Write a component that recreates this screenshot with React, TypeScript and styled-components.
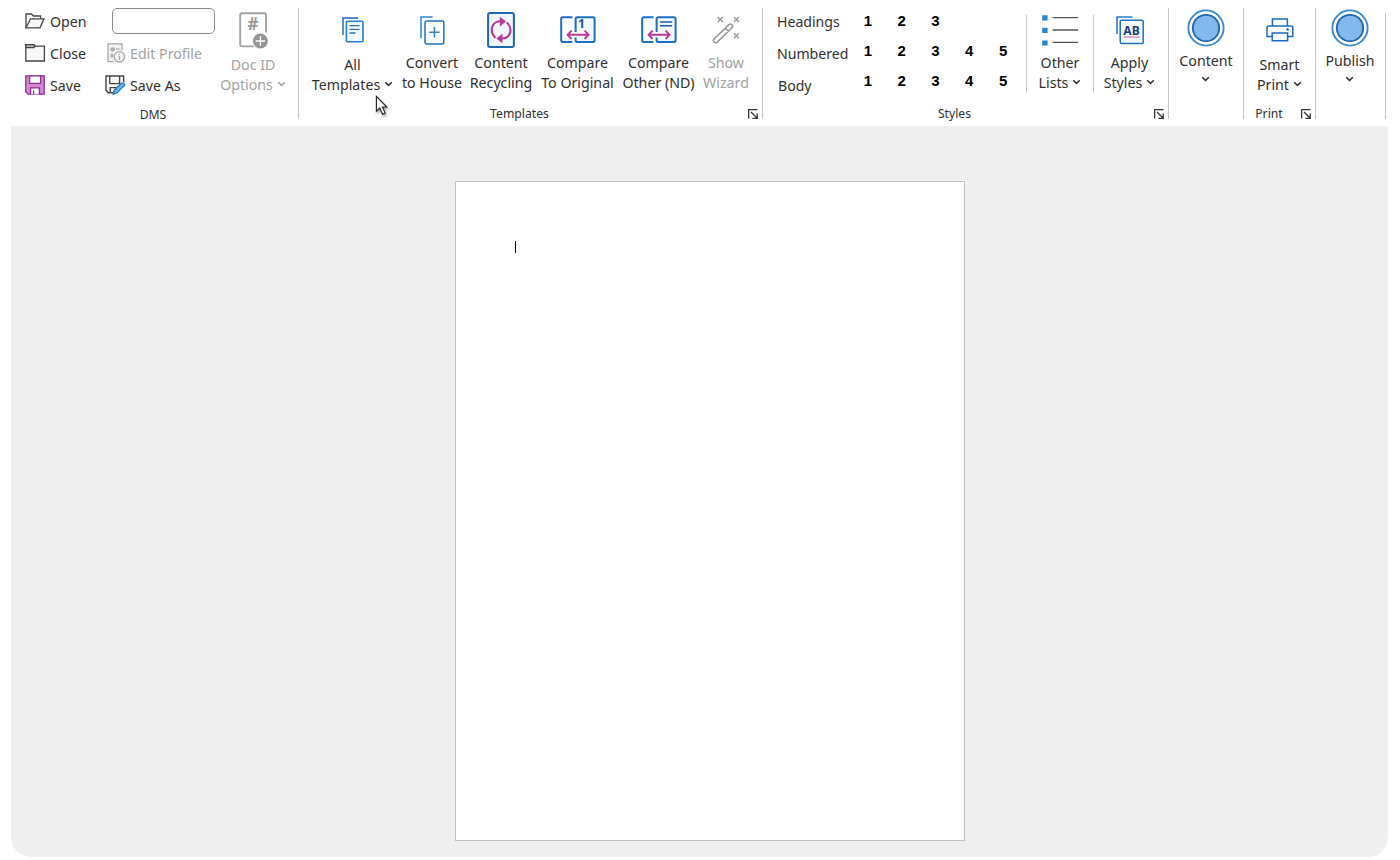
import React from "react";
import styled, { createGlobalStyle } from "styled-components";

const GlobalStyle = createGlobalStyle`
  body {
    margin: 0;
    background: #fff;
    font-family: "Noto Sans", "Open Sans", sans-serif;
    color: #303030;
    overflow: hidden;
  }
`;

const Shell = styled.div`
  width: 1400px;
  height: 860px;
  box-sizing: border-box;
  padding: 0 12px 3px 11px;
  display: flex;
  flex-direction: column;
  background: #fff;
`;

const Ribbon = styled.div`
  height: 126px;
  display: flex;
  flex: none;
`;

const Group = styled.section<{ $width: number; $top?: number }>`
  width: ${(p) => p.$width}px;
  height: 126px;
  box-sizing: border-box;
  display: flex;
  flex-direction: column;
  flex: none;
  background: linear-gradient(#c6c6c6, #c6c6c6) no-repeat right 0 top ${(p) => p.$top ?? 8}px / 1px
    ${(p) => 119 - (p.$top ?? 8)}px;
`;

const GroupBody = styled.div<{ $left?: number }>`
  height: 104px;
  padding-left: ${(p) => p.$left ?? 0}px;
  display: flex;
  align-items: flex-start;
`;

const GroupFooter = styled.div<{ $left?: number; $right?: number; $top?: number }>`
  display: flex;
  align-items: center;
  height: 19px;
  padding: ${(p) => p.$top ?? 0}px ${(p) => p.$right ?? 0}px 0 ${(p) => p.$left ?? 0}px;
`;

const GroupName = styled.div`
  flex: 1;
  text-align: center;
  font-size: 12.2px;
  line-height: 19px;
`;

const LauncherSlot = styled.div`
  width: 23px;
  height: 12px;
  display: flex;
  justify-content: flex-end;
  box-sizing: border-box;
  padding: 1px 5px 0 0;
`;

const BigButton = styled.div<{ $width: number; $muted?: boolean }>`
  width: ${(p) => p.$width}px;
  flex: none;
  display: flex;
  flex-direction: column;
  align-items: center;
  color: ${(p) => (p.$muted ? "#a3a3a3" : "#303030")};
`;

const IconSlot = styled.div<{ $height?: number; $nudge?: number }>`
  height: ${(p) => p.$height ?? 44}px;
  padding-top: 8px;
  padding-left: ${(p) => p.$nudge ?? 0}px;
  display: flex;
  align-items: center;
  justify-content: center;
`;

const Line = styled.div`
  height: 20px;
  line-height: 20px;
  font-size: 14.2px;
  white-space: nowrap;
  display: flex;
  align-items: center;
  gap: 4px;
`;

const ChevronLine = styled.div`
  height: 18px;
  padding-right: 1px;
  display: flex;
  align-items: center;
`;

const Lines = styled.div<{ $top?: number }>`
  padding-top: ${(p) => p.$top ?? 1}px;
  display: flex;
  flex-direction: column;
  align-items: center;
`;

const Divider = styled.div`
  width: 1px;
  height: 78px;
  margin-top: 15px;
  background: #cacaca;
`;

const DmsColumn = styled.div<{ $width: number }>`
  width: ${(p) => p.$width}px;
  padding-top: 5px;
`;

const Command = styled.div<{ $muted?: boolean; $indent?: number }>`
  height: 32px;
  padding-left: ${(p) => p.$indent ?? 0}px;
  display: flex;
  align-items: center;
  gap: 4px;
  font-size: 14.2px;
  white-space: nowrap;
  color: ${(p) => (p.$muted ? "#a3a3a3" : "#303030")};
  svg {
    flex: none;
  }
`;

const DocNumber = styled.input`
  display: block;
  width: 103px;
  height: 26px;
  box-sizing: border-box;
  margin: 3px 0 3px 7px;
  border: 1px solid #8a8a8a;
  border-radius: 5px;
  background: #fff;
  padding: 0 6px;
`;

const StyleNames = styled.div`
  width: 74px;
  padding-top: 6px;
`;

const StyleName = styled.div<{ $indent?: number }>`
  height: 32px;
  padding-left: ${(p) => p.$indent ?? 0}px;
  line-height: 32px;
  font-size: 14.1px;
  white-space: nowrap;
`;

const LevelGrid = styled.div`
  display: grid;
  grid-template-columns: repeat(5, 33.8px);
  grid-auto-rows: 30px;
  padding-top: 6px;
  width: 175px;
  box-sizing: border-box;
`;

const Level = styled.div<{ $col: number; $row: number }>`
  grid-column: ${(p) => p.$col};
  grid-row: ${(p) => p.$row};
  font: bold 15px/30px "Liberation Sans", Arial, sans-serif;
  text-align: center;
  color: #000;
`;

const Workspace = styled.main`
  flex: 1;
  background: #efefef;
  border-radius: 0 0 20px 20px;
  padding: 55px 0 0 444px;
`;

const Page = styled.div`
  width: 510px;
  height: 660px;
  box-sizing: border-box;
  border: 1px solid #c2c2c2;
  background: #fff;
  padding: 59px;
`;

const Caret = styled.div`
  width: 1px;
  height: 12px;
  background: #000;
`;

const Pointer = styled.svg`
  position: absolute;
  left: 374px;
  top: 94px;
  filter: drop-shadow(1px 2px 1px rgba(0, 0, 0, 0.35));
`;

const Chevron = ({ muted }: { muted?: boolean }) => (
  <svg width="9" height="8" viewBox="0 0 9 8" fill="none" stroke={muted ? "#a3a3a3" : "#333"} strokeWidth="1.5">
    <path d="M1.2 1.2L4.5 4.4L7.8 1.2" />
  </svg>
);

const Launcher = () => (
  <LauncherSlot>
    <svg width="10" height="10" viewBox="0 0 10 10" fill="none" stroke="#333" strokeWidth="1.3">
      <path d="M0.6 9.5V0.6H9.5M3 3L9 9M9.2 4.4V9.3H4.4" />
    </svg>
  </LauncherSlot>
);

const OpenIcon = () => (
  <svg width="21" height="20" viewBox="0 0 21 20" fill="none" stroke="#444" strokeWidth="1.3">
    <path d="M1 16.8V3H6.5L8.5 5H15.6V7.8" />
    <path d="M1 16.8L5.5 7.8H19L15 16.8Z" fill="#f6f6f6" />
  </svg>
);

const CloseIcon = () => (
  <svg width="21" height="20" viewBox="0 0 21 20" fill="none" stroke="#444" strokeWidth="1.3">
    <path d="M0.8 18V1.6H8.8L10 3.2H19.4V18Z" fill="#f8f8f8" />
    <path d="M0.8 1.6H8.8L10 3.2L8.8 4.6H0.8Z" fill="#b5b5b5" />
  </svg>
);

const SaveIcon = () => (
  <svg width="21" height="20" viewBox="0 0 21 20" stroke="#8f2f91" strokeWidth="1.3">
    <path d="M0.8 0.8H19.2V19.2H3.2L0.8 17Z" fill="#d587d3" />
    <path d="M4.6 0.8H15.6V8.4H4.6Z" fill="#fff" />
    <path d="M5.6 19.2V12.8H14.4V19.2" fill="#fff" />
    <path d="M8.6 15.4V19.2" fill="none" />
  </svg>
);

const EditProfileIcon = () => (
  <svg width="19" height="20" viewBox="0 0 19 20" fill="none" stroke="#a9a9a9" strokeWidth="1.3">
    <path d="M6.5 18.6H1V0.8H15V7.5" fill="#f3f3f3" />
    <path d="M4 5H7.2V8H4ZM4 11.2H5.8V14H4Z" fill="#b5b5b5" strokeWidth="1" />
    <path d="M9 6H12.6" />
    <circle cx="12.4" cy="13.8" r="5.2" fill="#f6f6f6" />
    <path d="M12.4 12.8V17M12.4 10.4V11.7" strokeWidth="1.5" />
  </svg>
);

const SaveAsIcon = () => (
  <svg width="21" height="21" viewBox="0 0 21 21" fill="none" stroke="#444" strokeWidth="1.4">
    <path d="M8 17.8H3.4L1 15.4V1H18.6V7" />
    <path d="M4.8 1V8.6H14.6V1" />
    <path d="M5.2 17.8V12.6H11" />
    <path d="M9 15.2L16.6 8Q18.8 7.4 19.8 9.8L12.4 17.6L8.2 19.4Z" fill="#67b1e6" stroke="#1c78bf" strokeWidth="1.2" />
  </svg>
);

const HashText = styled.text`
  font: 700 17px "Noto Sans", sans-serif;
  fill: #999;
  stroke: none;
`;

const DocIdIcon = () => (
  <svg width="30" height="37" viewBox="0 0 30 37" fill="none" stroke="#a3a3a3">
    <path d="M14.6 34.4H3Q1.2 34.4 1.2 32.6V3Q1.2 1.2 3 1.2H25.2Q27 1.2 27 3V20.6" strokeWidth="1.9" />
    <HashText x="8.6" y="18">#</HashText>
    <circle cx="21.4" cy="29" r="7.5" fill="#969696" stroke="none" />
    <path d="M21.4 24.2V33.8M16.6 29H26.2" stroke="#fff" strokeWidth="1.4" />
  </svg>
);

const AllTemplatesIcon = () => (
  <svg width="22" height="26" viewBox="0 0 22 26" fill="none">
    <path d="M1 18V1H16" stroke="#1765b8" strokeWidth="1.4" />
    <rect x="4.4" y="4.2" width="16.6" height="20.6" rx="1" fill="#f5fafe" stroke="#2280d4" strokeWidth="1.6" />
    <path d="M7.5 8.6H17.5M7.5 12.3H17.5M7.5 16H13.6" stroke="#2a6fb8" strokeWidth="1.3" />
  </svg>
);

const ConvertIcon = () => (
  <svg width="25" height="29" viewBox="0 0 25 29" fill="none">
    <path d="M1 22.5V1H12.6" stroke="#2a86d6" strokeWidth="1.5" />
    <rect x="5" y="5" width="18.8" height="23" rx="1.5" fill="#f7fbfe" stroke="#2273c0" strokeWidth="1.5" />
    <path d="M14.4 11V21.4M9.2 16.2H19.6" stroke="#3f80b8" strokeWidth="1.5" />
  </svg>
);

const RecyclingIcon = () => (
  <svg width="28" height="36" viewBox="0 0 28 36" fill="none">
    <rect x="1.1" y="1.1" width="25.8" height="33.8" rx="2" fill="#f2f7fc" stroke="#1c68b4" strokeWidth="2" />
    <path d="M8.4 26Q2.4 19.4 6 13Q8.6 9 14.5 9.2" stroke="#b93a9c" strokeWidth="2.1" />
    <path d="M12.8 4.8L19 9.6L12.8 14.4Z" fill="#b93a9c" />
    <path d="M20 10.4Q25.8 17 22 23.2Q19.4 26.8 13.8 26.6" stroke="#b93a9c" strokeWidth="2.1" />
    <path d="M15.4 21.6L9.4 26.4L15.4 31.2Z" fill="#b93a9c" />
  </svg>
);

const OneText = styled.text`
  font: 700 11.5px "Noto Sans", sans-serif;
  fill: #174f94;
`;

const CompareIcon = ({ variant }: { variant: "number" | "lines" }) => (
  <svg width="36" height="28" viewBox="0 0 36 28" fill="none">
    <path d="M12.4 1.2H3Q1.2 1.2 1.2 3V24.2Q1.2 26 3 26H12.4" stroke="#1c6fc2" strokeWidth="2" />
    <path d="M15.6 16V3Q15.6 1.2 17.4 1.2H32.8Q34.6 1.2 34.6 3V24.2Q34.6 26 32.8 26H17.4Q15.6 26 15.6 24.2V21.4" fill="#f3f8fd" stroke="#1c6fc2" strokeWidth="2" />
    {variant === "number" ? (
      <OneText x="18.2" y="12.4">1</OneText>
    ) : (
      <path d="M19 6H31.2M19 9.8H31.2" stroke="#1c5ea6" strokeWidth="1.6" />
    )}
    <path d="M8 18.8H28M11.6 14.8L7.8 18.8L11.6 22.8M24.6 14.8L28.4 18.8L24.6 22.8" stroke="#fff" strokeWidth="3.6" />
    <path d="M8 18.8H28M11.6 14.6L7.6 18.8L11.6 23M24.6 14.6L28.6 18.8L24.6 23" stroke="#b93a9c" strokeWidth="1.9" />
  </svg>
);

const WizardIcon = () => (
  <svg width="29" height="28" viewBox="0 0 29 28" fill="none" stroke="#979797" strokeWidth="1.5">
    <path d="M1.6 23.4L17.2 8.4Q18.6 7.4 20 8.8Q21.2 10.2 20.2 11.6L5 26.4Q3.4 27.4 2 26Q0.8 24.6 1.6 23.4ZM13.2 12.2L16.6 15.4" />
    <path d="M5.8 1L10.8 6M10.8 1L5.8 6M22 1L27 6M27 1L22 6M22 17.2L27 22.2M27 17.2L22 22.2" strokeWidth="1.3" />
  </svg>
);

const OtherListsIcon = () => (
  <svg width="36" height="31" viewBox="0 0 36 31">
    <path d="M0.2 0.2H5.6V5.4H0.2ZM0.2 12.8H5.6V18H0.2ZM0.2 25.4H5.6V30.6H0.2Z" fill="#2b86cd" />
    <path d="M10.6 2.6H36M10.6 15H36M10.6 27.4H36" stroke="#555" strokeWidth="1.4" />
  </svg>
);

const AbText = styled.text`
  font: 700 12px "Noto Sans", sans-serif;
  letter-spacing: 0.3px;
  fill: #193d80;
`;

const ApplyStylesIcon = () => (
  <svg width="28" height="29" viewBox="0 0 28 29" fill="none">
    <path d="M1 18V1H16.5" stroke="#2a7dcc" strokeWidth="1.6" />
    <rect x="4.2" y="4.2" width="23" height="23.4" rx="1.5" fill="#f7fbff" stroke="#2273c0" strokeWidth="1.5" />
    <AbText x="7.2" y="19.4">AB</AbText>
    <path d="M7.2 21H24" stroke="#d65cae" strokeWidth="1" />
  </svg>
);

const CircleIcon = () => (
  <svg width="38" height="38" viewBox="0 0 38 38">
    <circle cx="19" cy="19" r="17.6" fill="#fff" stroke="#3a8aca" strokeWidth="1.9" />
    <circle cx="19" cy="19" r="13.2" fill="#82b9ee" stroke="#1d66b0" strokeWidth="1.8" />
  </svg>
);

const PrinterIcon = () => (
  <svg width="28" height="24" viewBox="0 0 28 24" fill="none" stroke="#1c6cc0" strokeWidth="1.5">
    <path d="M6.4 8V1H21.4V8" fill="#f7fbff" />
    <path d="M6.2 18.6H1V10Q1 8 3 8H24.8Q26.8 8 26.8 10V18.6H21.6" />
    <path d="M6.2 15H21.6V22.8H6.2Z" fill="#f7fbff" />
    <circle cx="21.6" cy="11.4" r="1.2" fill="#174f94" stroke="none" />
  </svg>
);

const levels = [3, 5, 5];

export default function App() {
  return (
    <Shell>
      <GlobalStyle />
      <Ribbon>
        <Group $width={288}>
          <GroupBody $left={14}>
            <DmsColumn $width={80}>
              <Command><OpenIcon />Open</Command>
              <Command><CloseIcon />Close</Command>
              <Command><SaveIcon />Save</Command>
            </DmsColumn>
            <DmsColumn $width={110}>
              <DocNumber />
              <Command $muted $indent={2}><EditProfileIcon />Edit Profile</Command>
              <Command><SaveAsIcon />Save As</Command>
            </DmsColumn>
            <BigButton $width={76} $muted>
              <IconSlot $nudge={1}><DocIdIcon /></IconSlot>
              <Lines $top={3}>
                <Line>Doc ID</Line>
                <Line>Options <Chevron muted /></Line>
              </Lines>
            </BigButton>
          </GroupBody>
          <GroupFooter $right={4} $top={1}><GroupName>DMS</GroupName></GroupFooter>
        </Group>

        <Group $width={464}>
          <GroupBody $left={7}>
            <BigButton $width={93}>
              <IconSlot $nudge={1}><AllTemplatesIcon /></IconSlot>
              <Lines $top={3}>
                <Line>All</Line>
                <Line>Templates <Chevron /></Line>
              </Lines>
            </BigButton>
            <BigButton $width={66}>
              <IconSlot><ConvertIcon /></IconSlot>
              <Lines><Line>Convert</Line><Line>to House</Line></Lines>
            </BigButton>
            <BigButton $width={72}>
              <IconSlot><RecyclingIcon /></IconSlot>
              <Lines><Line>Content</Line><Line>Recycling</Line></Lines>
            </BigButton>
            <BigButton $width={81}>
              <IconSlot><CompareIcon variant="number" /></IconSlot>
              <Lines><Line>Compare</Line><Line>To Original</Line></Lines>
            </BigButton>
            <BigButton $width={81}>
              <IconSlot><CompareIcon variant="lines" /></IconSlot>
              <Lines><Line>Compare</Line><Line>Other (ND)</Line></Lines>
            </BigButton>
            <BigButton $width={54} $muted>
              <IconSlot><WizardIcon /></IconSlot>
              <Lines><Line>Show</Line><Line>Wizard</Line></Lines>
            </BigButton>
          </GroupBody>
          <GroupFooter><GroupName>Templates</GroupName><Launcher /></GroupFooter>
        </Group>

        <Group $width={406}>
          <GroupBody $left={14}>
            <StyleNames>
              <StyleName>Headings</StyleName>
              <StyleName>Numbered</StyleName>
              <StyleName $indent={1}>Body</StyleName>
            </StyleNames>
            <LevelGrid>
              {levels.map((count, row) =>
                Array.from({ length: count }, (_, i) => (
                  <Level key={`${row}-${i}`} $row={row + 1} $col={i + 1}>{i + 1}</Level>
                ))
              )}
            </LevelGrid>
            <Divider />
            <BigButton $width={66}>
              <IconSlot><OtherListsIcon /></IconSlot>
              <Lines><Line>Other</Line><Line>Lists <Chevron /></Line></Lines>
            </BigButton>
            <Divider />
            <BigButton $width={71}>
              <IconSlot><ApplyStylesIcon /></IconSlot>
              <Lines><Line>Apply</Line><Line>Styles <Chevron /></Line></Lines>
            </BigButton>
          </GroupBody>
          <GroupFooter><GroupName>Styles</GroupName><Launcher /></GroupFooter>
        </Group>

        <Group $width={75}>
          <GroupBody>
            <BigButton $width={74}>
              <IconSlot $height={40}><CircleIcon /></IconSlot>
              <Lines $top={3}><Line>Content</Line><ChevronLine><Chevron /></ChevronLine></Lines>
            </BigButton>
          </GroupBody>
        </Group>

        <Group $width={72}>
          <GroupBody>
            <BigButton $width={71}>
              <IconSlot $nudge={1}><PrinterIcon /></IconSlot>
              <Lines $top={3}><Line>Smart</Line><Line>Print <Chevron /></Line></Lines>
            </BigButton>
          </GroupBody>
          <GroupFooter $left={1}><GroupName>Print</GroupName><Launcher /></GroupFooter>
        </Group>

        <Group $width={70} $top={13}>
          <GroupBody>
            <BigButton $width={68}>
              <IconSlot $height={40}><CircleIcon /></IconSlot>
              <Lines $top={3}><Line>Publish</Line><ChevronLine><Chevron /></ChevronLine></Lines>
            </BigButton>
          </GroupBody>
        </Group>
      </Ribbon>
      <Workspace>
        <Page><Caret /></Page>
      </Workspace>
      <Pointer width="16" height="22" viewBox="0 0 16 22">
        <path d="M2.4 2.4V17.2L5.8 14L8.6 20.2L11.2 19L8.4 13H12.8Z" fill="#fff" stroke="#222" strokeWidth="1.1" />
      </Pointer>
    </Shell>
  );
}
